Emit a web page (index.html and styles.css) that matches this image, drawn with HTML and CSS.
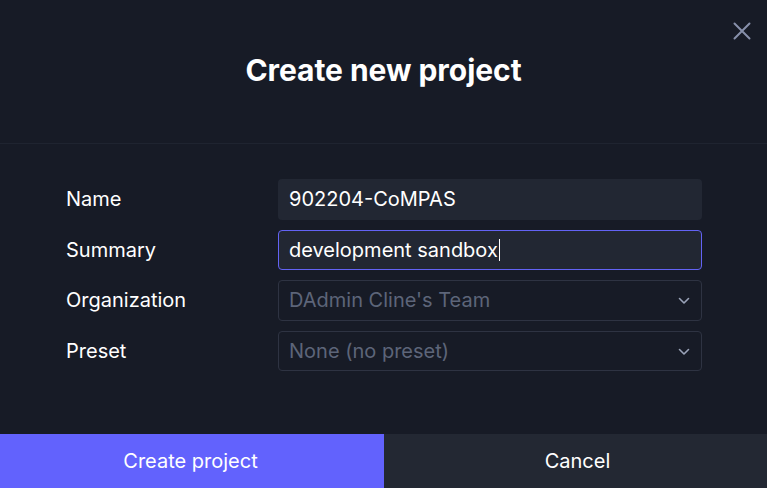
FILE: index.html
```html
<!DOCTYPE html>
<html>
<head>
<meta charset="utf-8">
<link rel="stylesheet" href="styles.css">
</head>
<body>
<div class="dialog">
  <header class="head">
    <h1 class="title">Create new project</h1>
    <button class="close" aria-label="Close">
      <svg width="18" height="18" viewBox="0 0 18 18"><path d="M1.5 1.5L16.5 16.5M16.5 1.5L1.5 16.5" stroke="#8790aa" stroke-width="2" stroke-linecap="round"/></svg>
    </button>
  </header>
  <div class="form">
    <div class="row"><span class="label">Name</span><div class="field filled">902204-CoMPAS</div></div>
    <div class="row"><span class="label">Summary</span><div class="field filled focus">development sandbox<span class="caret"></span></div></div>
    <div class="row"><span class="label">Organization</span><div class="field select">DAdmin Cline's Team<svg class="chev" width="12" height="8" viewBox="0 0 12 8"><path d="M1.5 1.5L6 6L10.5 1.5" fill="none" stroke="#9aa3b8" stroke-width="1.6" stroke-linecap="round" stroke-linejoin="round"/></svg></div></div>
    <div class="row"><span class="label">Preset</span><div class="field select">None (no preset)<svg class="chev" width="12" height="8" viewBox="0 0 12 8"><path d="M1.5 1.5L6 6L10.5 1.5" fill="none" stroke="#9aa3b8" stroke-width="1.6" stroke-linecap="round" stroke-linejoin="round"/></svg></div></div>
  </div>
  <footer class="actions">
    <button class="btn primary">Create project</button>
    <button class="btn secondary">Cancel</button>
  </footer>
</div>
</body>
</html>
```
FILE: styles.css
```css
* { box-sizing: border-box; }
html, body { margin: 0; height: 100%; }
body {
  background: #171b26;
  font-family: Inter, "Noto Sans", sans-serif;
  color: #fff;
}
.dialog {
  width: 767px;
  height: 488px;
  display: flex;
  flex-direction: column;
  overflow: hidden;
}
.head {
  position: relative;
  height: 144px;
  border-bottom: 1px solid #1f2430;
  display: flex;
  align-items: center;
  justify-content: center;
}
.title {
  margin: 0 0 3px 0;
  font-size: 30px;
  font-weight: 700;
  letter-spacing: -0.05px;
}
.close {
  position: absolute;
  top: 22px;
  right: 16px;
  background: none;
  border: 0;
  padding: 0;
  width: 18px;
  height: 18px;
}
.form {
  flex: 1;
  padding: 35px 65px 0 66px;
  display: flex;
  flex-direction: column;
  gap: 10px;
}
.row {
  display: flex;
  align-items: center;
}
.label {
  width: 212px;
  font-size: 20px;
  color: #fff;
}
.field {
  position: relative;
  width: 424px;
  height: 40.5px;
  border-radius: 4px;
  padding: 0 10px;
  display: flex;
  align-items: center;
  font-size: 20px;
  border: 1px solid transparent;
}
.filled {
  background: #222733;
  color: #fff;
}
.focus {
  border-color: #6363f5;
}
.caret {
  display: inline-block;
  width: 1px;
  height: 22px;
  background: #fff;
  margin-left: 1px;
}
.select {
  border-color: #2e3342;
  color: #5d6579;
}
.chev {
  position: absolute;
  right: 11px;
  top: 16px;
}
.actions {
  display: flex;
  height: 54px;
}
.btn {
  border: 0;
  font-family: inherit;
  font-size: 20px;
  color: #fff;
}
.primary {
  width: 384px;
  background: #6262fd;
  padding: 0 3px 0 0;
}
.secondary {
  flex: 1;
  background: #232833;
  padding: 0 0 0 4px;
}
```
